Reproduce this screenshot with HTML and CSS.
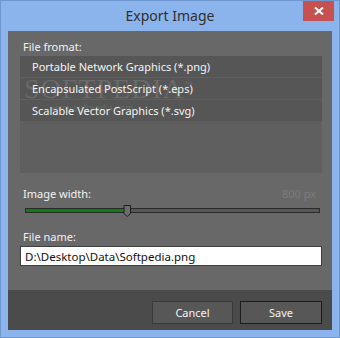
FILE: index.html
```html
<!DOCTYPE html>
<html lang="en">
<head>
    <meta charset="UTF-8">
    <meta name="viewport" content="width=device-width, initial-scale=1.0">
    <title>Export Image</title>
    <link rel="stylesheet" href="styles.css">
</head>
<body>
    <div class="window">
        <div class="titlebar">
            <span class="title">Export Image</span>
            <div class="close">
                <svg width="10" height="8" viewBox="0 0 10 8">
                    <path d="M1 0.5 L9 7.5 M9 0.5 L1 7.5" stroke="#fff" stroke-width="2"/>
                </svg>
            </div>
        </div>

        <div class="client">
            <div class="main">
                <div class="label first">File fromat:</div>
                <div class="listbox">
                    <div class="item">Portable Network Graphics (*.png)</div>
                    <div class="item">Encapsulated PostScript (*.eps)</div>
                    <div class="item">Scalable Vector Graphics (*.svg)</div>
                    <div class="watermark">
                        <span class="wm-big">SOFTPEDIA<sup>™</sup></span>
                        <span class="wm-small">www.softpedia.com</span>
                    </div>
                </div>

                <div class="label row">
                    <span>Image width:</span>
                    <span class="value">800 px</span>
                </div>
                <div class="slider">
                    <div class="track">
                        <div class="fill" style="width: 34%"></div>
                    </div>
                    <svg class="thumb" width="9" height="12" viewBox="0 0 9 12">
                        <path d="M1 0.5 H7.5 V8.5 L4.25 11.5 L1 8.5 Z" fill="#6c6c6c" stroke="#1e1e1e" stroke-width="1"/>
                    </svg>
                </div>

                <div class="label">File name:</div>
                <input class="filename" type="text" value="D:\Desktop\Data\Softpedia.png">
            </div>

            <div class="footer">
                <button class="btn">Cancel</button>
                <button class="btn default">Save</button>
            </div>
        </div>
    </div>
</body>
</html>
```

FILE: styles.css
```css
body {
    margin: 0;
    font-family: "Noto Sans", "Open Sans", sans-serif;
    font-size: 11px;
    background-color: #8cb4ec;
}
.window {
    width: 340px;
    height: 338px;
    box-sizing: border-box;
    border: 1px solid #6f97cf;
    padding: 0 7px 7px 7px;
    background-color: #8cb4ec;
    display: flex;
    flex-direction: column;
}
.titlebar {
    height: 30px;
    position: relative;
    display: flex;
    align-items: center;
    justify-content: center;
}
.title {
    font-size: 14px;
    color: #2f2f2f;
    margin-top: -1px;
}
.close {
    position: absolute;
    top: 0;
    right: -2px;
    width: 31px;
    height: 20px;
    background-color: #c75050;
    display: flex;
    align-items: center;
    justify-content: center;
}
.client {
    flex: 1;
    display: flex;
    flex-direction: column;
    background-color: #686868;
}
.main {
    flex: 1;
    padding: 0 10px 0 12px;
    display: flex;
    flex-direction: column;
}
.label {
    color: #f2f2f2;
    line-height: 16px;
    padding-left: 3px;
    margin-top: 12px;
}
.label.first {
    margin-top: 8px;
    margin-bottom: 1px;
}
.row {
    display: flex;
    justify-content: space-between;
    margin-top: 13px;
    padding-right: 6px;
}
.value {
    color: #7c7c7c;
}
.listbox {
    position: relative;
    height: 117px;
    background-color: #5f5f5f;
    display: flex;
    flex-direction: column;
    gap: 1px;
    overflow: hidden;
}
.item {
    height: 21px;
    line-height: 21px;
    padding-left: 12px;
    background-color: #565656;
    color: #f4f4f4;
}
.watermark {
    position: absolute;
    left: 4px;
    top: 17px;
    display: flex;
    flex-direction: column;
    pointer-events: none;
}
.wm-big {
    font-family: "Liberation Serif", serif;
    font-size: 28px;
    letter-spacing: 1px;
    color: rgba(255, 255, 255, 0.13);
}
.wm-big sup {
    font-family: "Liberation Sans", sans-serif;
    font-size: 9px;
}
.wm-small {
    font-size: 9px;
    margin-left: 26px;
    margin-top: -4px;
    color: rgba(255, 255, 255, 0.13);
}
.slider {
    position: relative;
    height: 12px;
    margin-top: 3px;
    padding: 3px 2px 0 5px;
    box-sizing: border-box;
}
.track {
    height: 5px;
    box-sizing: border-box;
    border: 1px solid #2a2a2a;
    background-color: #575757;
}
.fill {
    height: 100%;
    background-color: #117c11;
}
.thumb {
    position: absolute;
    left: 103px;
    top: 0;
}
.filename {
    margin-top: 1px;
    height: 20px;
    box-sizing: border-box;
    border: 1px solid #3f3f3f;
    padding: 0 4px;
    font-family: "Noto Sans", "Open Sans", sans-serif;
    font-size: 11.5px;
    color: #111;
    background: white;
    outline: none;
}
.footer {
    height: 40px;
    box-sizing: border-box;
    background-color: #4b4b4b;
    display: flex;
    justify-content: flex-end;
    gap: 7px;
    padding: 11px 10px 0 0;
}
.btn {
    width: 81px;
    height: 23px;
    background-color: #575757;
    color: #f4f4f4;
    border: 1px solid #3a3a3a;
    font-family: "Noto Sans", "Open Sans", sans-serif;
    font-size: 11px;
    padding: 0;
}
.btn.default {
    width: 82px;
    border-color: #1c1c1c;
}
```
